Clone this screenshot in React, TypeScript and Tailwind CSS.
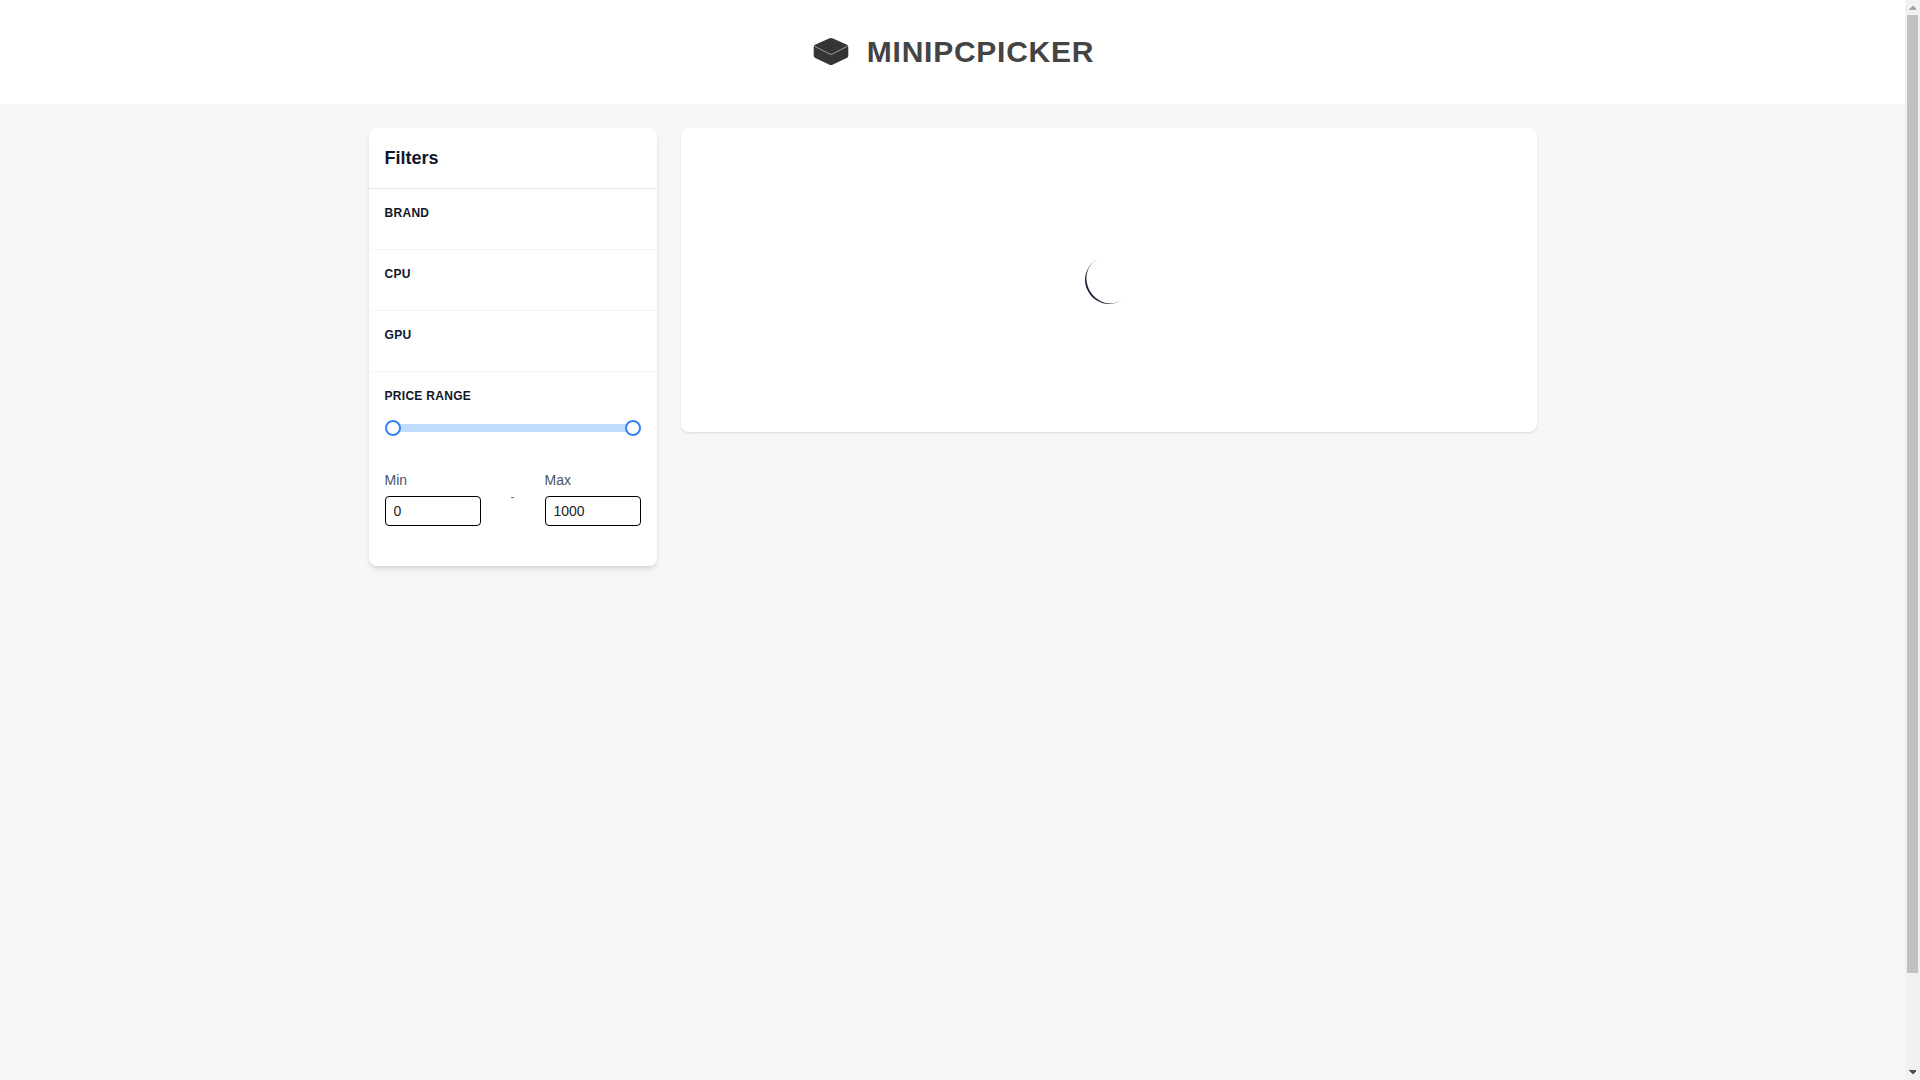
import { useState } from 'react';

const MAX_PRICE = 1000;

const thumbStyles =
  'pointer-events-none absolute inset-0 m-0 h-6 w-full cursor-pointer appearance-none bg-transparent [&::-webkit-slider-thumb]:pointer-events-auto [&::-webkit-slider-thumb]:h-4 [&::-webkit-slider-thumb]:w-4 [&::-webkit-slider-thumb]:appearance-none [&::-webkit-slider-thumb]:rounded-full [&::-webkit-slider-thumb]:border-2 [&::-webkit-slider-thumb]:border-[#3b82f6] [&::-webkit-slider-thumb]:bg-white';

function Logo() {
  return (
    <svg width="40" height="40" viewBox="-1 0 40 40" aria-hidden="true">
      <path
        d="M17 6.6Q19 5.6 21 6.6L34.5 12.6Q36.3 13.5 36.3 15.2V23.4Q36.3 25 34.7 25.9L21 32.4Q19 33.4 17 32.4L3.3 25.9Q1.7 25 1.7 23.4V15.2Q1.7 13.5 3.5 12.6Z"
        fill="#343635"
      />
      <path
        d="M2.6 14.3L17.2 21.8Q19 22.8 20.8 21.8L35.4 14.3"
        fill="none"
        stroke="#b4b6b5"
        strokeWidth="0.8"
      />
    </svg>
  );
}

function Header() {
  return (
    <header className="flex h-[104px] items-center justify-center gap-4 bg-white">
      <Logo />
      <h1 className="text-3xl font-bold tracking-wide text-[#444444]">MINIPCPICKER</h1>
    </header>
  );
}

function FilterSection({ title, children }: { title: string; children?: React.ReactNode }) {
  return (
    <section className="border-b border-[#f3f4f6] p-4 last:border-b-0">
      <h3 className="mb-3 text-xs font-semibold tracking-wide text-[#0f172a] uppercase">{title}</h3>
      {children}
    </section>
  );
}

interface PriceInputProps {
  id: string;
  label: string;
  value: number;
  onChange: (value: number) => void;
}

function PriceInput({ id, label, value, onChange }: PriceInputProps) {
  return (
    <div className="w-24">
      <label htmlFor={id} className="mb-1.5 block text-sm text-[#475569]">
        {label}
      </label>
      <input
        id={id}
        type="text"
        inputMode="numeric"
        value={value}
        onChange={(e) => onChange(Number(e.target.value) || 0)}
        className="block w-full rounded border border-black bg-white px-2 py-1 text-sm text-[#222222]"
      />
    </div>
  );
}

function PriceRange() {
  const [min, setMin] = useState(0);
  const [max, setMax] = useState(MAX_PRICE);

  return (
    <div className="pb-6">
      <div className="relative mb-[30px] flex h-6 items-center">
        <div className="h-2 w-full rounded-full bg-[#bfdbfe]" />
        <input
          type="range"
          aria-label="Minimum price"
          min={0}
          max={MAX_PRICE}
          value={min}
          onChange={(e) => setMin(Math.min(Number(e.target.value), max))}
          className={thumbStyles}
        />
        <input
          type="range"
          aria-label="Maximum price"
          min={0}
          max={MAX_PRICE}
          value={max}
          onChange={(e) => setMax(Math.max(Number(e.target.value), min))}
          className={thumbStyles}
        />
      </div>
      <div className="flex items-center justify-between">
        <PriceInput id="min-price" label="Min" value={min} onChange={setMin} />
        <span className="pb-0.5 text-xs text-[#64748b]">-</span>
        <PriceInput id="max-price" label="Max" value={max} onChange={setMax} />
      </div>
    </div>
  );
}

function Filters() {
  return (
    <aside className="w-72 shrink-0 rounded-lg bg-white shadow-md">
      <div className="border-b border-[#e5e7eb] p-4">
        <h2 className="text-lg font-semibold text-[#0f172a]">Filters</h2>
      </div>
      <FilterSection title="Brand" />
      <FilterSection title="CPU" />
      <FilterSection title="GPU" />
      <FilterSection title="Price Range">
        <PriceRange />
      </FilterSection>
    </aside>
  );
}

function Scrollbar() {
  return (
    <div className="flex w-[15px] shrink-0 flex-col items-center bg-[#f1f1f1]" aria-hidden="true">
      <svg width="15" height="15" viewBox="0 0 15 15" shapeRendering="crispEdges">
        <path d="M4 10V9L7 6H8L11 9V10Z" fill="#a3a3a3" />
      </svg>
      <div className="flex w-full flex-1 flex-col px-0.5">
        <div className="h-[91.2%] bg-[#c1c1c1]" />
      </div>
      <svg width="15" height="15" viewBox="0 0 15 15" shapeRendering="crispEdges">
        <path d="M4 5V6L7 9H8L11 6V5Z" fill="#505050" />
      </svg>
    </div>
  );
}

export default function App() {
  return (
    <div className="flex h-screen bg-[#f7f7f7] font-['Liberation_Sans',Arial,sans-serif]">
      <div className="min-w-0 flex-1 overflow-hidden">
        <Header />
        <main className="mx-auto flex max-w-[1200px] items-start gap-6 px-4 py-6">
          <Filters />
          <div className="flex flex-1 items-center justify-center rounded-lg bg-white py-32 shadow-sm">
            <div
              role="status"
              aria-label="Loading"
              className="h-12 w-12 rotate-60 rounded-full border-b-2 border-[#1e293b]"
            />
          </div>
        </main>
      </div>
      <Scrollbar />
    </div>
  );
}
